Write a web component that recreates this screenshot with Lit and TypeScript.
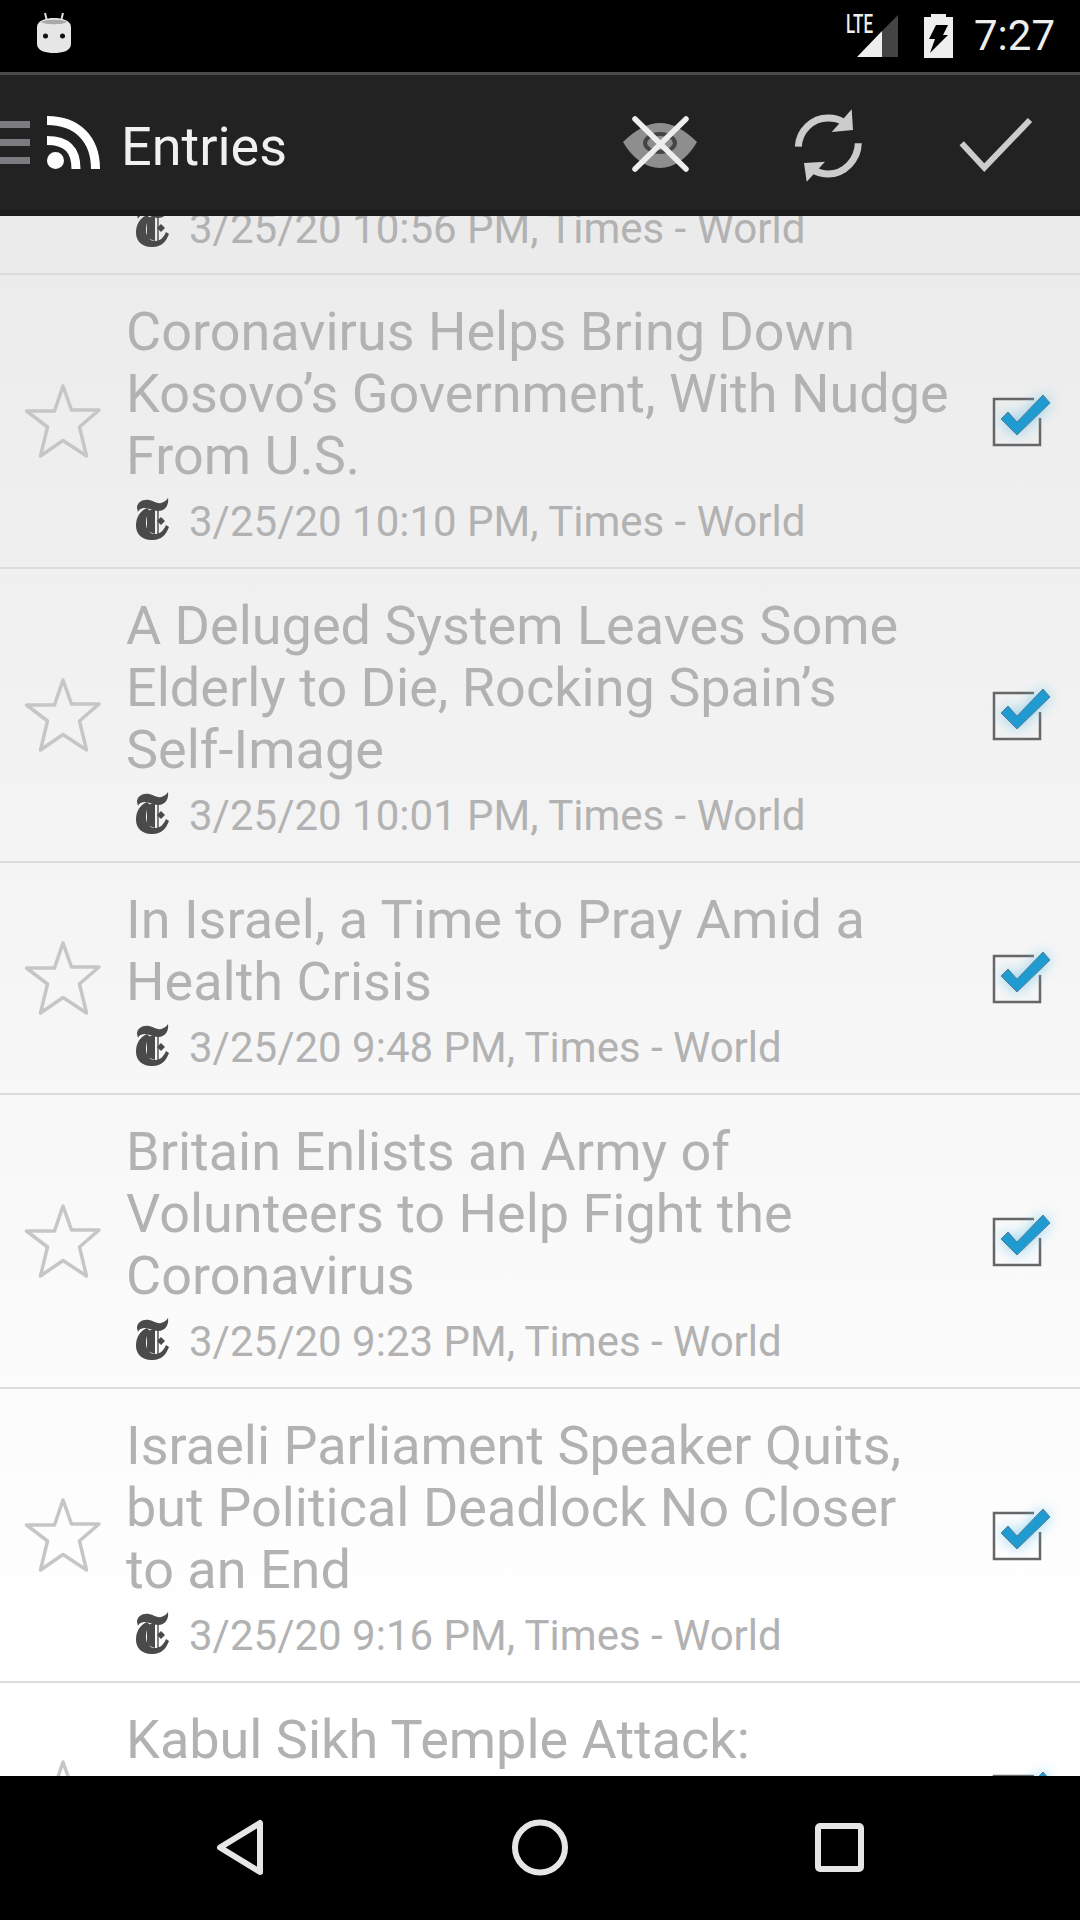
import { LitElement, html, css } from "lit";
import { customElement } from "lit/decorators.js";

const entries = [
  { title: "Coronavirus Helps Bring Down Kosovo’s Government, With Nudge From U.S.", meta: "3/25/20 10:10 PM, Times - World" },
  { title: "A Deluged System Leaves Some Elderly to Die, Rocking Spain’s Self-Image", meta: "3/25/20 10:01 PM, Times - World" },
  { title: "In Israel, a Time to Pray Amid a Health Crisis", meta: "3/25/20 9:48 PM, Times - World" },
  { title: "Britain Enlists an Army of Volunteers to Help Fight the Coronavirus", meta: "3/25/20 9:23 PM, Times - World" },
  { title: "Israeli Parliament Speaker Quits, but Political Deadlock No Closer to an End", meta: "3/25/20 9:16 PM, Times - World" },
];

// NYT blackletter T, coords from a 60x60 crop
const logo = html`<svg class="logo" viewBox="7 0 53 60" width="53" height="60">
  <path fill="#4a4a4a" d="M17 18C17 12 23 9 29 10C34 11 37 14 41 13C44 12 46 11 48 8C49 14 46 21 38 21C33 21 29 18 25 18C22 18 19 19 18 22Z" />
  <path fill="#4a4a4a" d="M27 18C20 21 16 27 16 36C16 45 24 51 33 50C41 50 46 45 49 37L46 35C43 42 39 44 35 44C29 44 26 39 26 33C26 28 27 24 30 21Z" />
  <path fill="#4a4a4a" d="M27 21L35 19V44L27 41Z" />
  <path fill="none" stroke="#4a4a4a" stroke-width="1.4" d="M38 20V46" />
  <path fill="#4a4a4a" d="M41 27L45 31L41 35L37 31Z" />
</svg>`;

const star = html`<svg class="star" viewBox="20 20 85 85" width="85" height="85">
  <path fill="none" stroke="#c6c6c6" stroke-width="3.500" stroke-linejoin="round"
    d="M62 27L70.500 51H98L78.500 68L85.500 97L62 81.500L39.500 97L46.500 68L25.500 52H53.500Z" />
</svg>`;

const checkbox = html`<svg class="check" viewBox="0 0 120 100" width="120" height="100">
  <defs><filter id="glow" x="-50%" y="-50%" width="200%" height="200%"><feGaussianBlur stdDeviation="7" /></filter></defs>
  <path fill="none" stroke="#666" stroke-width="2.5" d="M74 28H34V74H80V47" />
  <path fill="#5cc0ea" opacity=".75" filter="url(#glow)" d="M41 48L48 41L57 51L83 24L90 32L57 64Z" />
  <path fill="#1f9bd1" stroke="#5b7f92" stroke-width="1" d="M41 48L48 41L57 51L83 24L90 32L57 64Z" />
</svg>`;

@customElement("app-root")
export class AppRoot extends LitElement {
  static styles = css`
    :host {
      display: block;
      width: 1080px;
      height: 1920px;
      font-family: Roboto, sans-serif;
      background: #000;
    }
    .screen {
      display: flex;
      flex-direction: column;
      height: 1920px;
      overflow: hidden;
    }
    .status {
      flex: none;
      height: 72px;
      display: flex;
      align-items: center;
      padding-left: 37px;
      padding-right: 25px;
      background: #000;
    }
    .status .spacer {
      flex: 1;
    }
    .status svg {
      display: block;
    }
    .droid {
      margin-top: -6px;
    }
    .time {
      margin-left: 21px;
      font-size: 42px;
      color: #eee;
      line-height: 72px;
    }
    .bar {
      flex: none;
      height: 135px;
      display: flex;
      align-items: center;
      background: #222;
      border-top: 3px solid #4a4a4a;
      border-bottom: 6px solid #1b1b1b;
    }
    .burger {
      width: 30px;
      display: flex;
      flex-direction: column;
      gap: 11px;
      margin-right: 17px;
    }
    .burger i {
      display: block;
      height: 7px;
      background: #7b7b80;
    }
    .bar h1 {
      flex: 1;
      margin: 7px 0 0 21px;
      font-size: 54px;
      font-weight: 400;
      color: #f0f0f0;
    }
    .bar svg {
      display: block;
    }
    .list {
      flex: 1;
      min-height: 0;
      overflow: hidden;
      background: linear-gradient(#ebebeb, #ffffff 92%);
    }
    .row {
      display: grid;
      grid-template-columns: 126px 834px 120px;
      align-items: center;
      box-sizing: border-box;
      border-bottom: 2px solid #dcdcdc;
    }
    .star,
    .check {
      display: block;
      justify-self: center;
    }
    .text {
      padding: 26px 8px 16px 0;
    }
    .title {
      font-size: 54px;
      line-height: 62px;
      color: #b2b2b2;
    }
    .meta {
      display: flex;
      align-items: center;
      gap: 9px;
      height: 60px;
      margin-top: 4px;
      font-size: 42px;
      color: #b2b2b2;
    }
    .logo {
      display: block;
      margin: -3px 0 0 1px;
    }
    .cut {
      height: 59px;
      overflow: hidden;
      align-items: end;
      align-content: end;
    }
    .cut .meta {
      grid-column: 2;
      margin: 0 0 15px;
    }
    .last {
      height: 229px;
      border-bottom: none;
      align-items: start;
    }
    .last .star,
    .last .check {
      align-self: center;
    }
    .nav {
      flex: none;
      height: 144px;
      display: flex;
      justify-content: center;
      align-items: center;
      background: #000;
    }
    .nav svg {
      display: block;
      width: 300px;
    }
  `;

  render() {
    return html`<div class="screen">
      <div class="status">
        <svg class="droid" viewBox="37 10 36 46" width="36" height="46">
          <path stroke="#ddd" stroke-width="2" d="M45 13L47 21M63 13L61 21" />
          <path fill="#e6e6e6" d="M37 27C37 20 47 18 54 18C61 18 71 20 71 27V44C71 51 62 53 54 53C46 53 37 51 37 44Z" />
          <path fill="#a9a9a9" d="M41 22C45 19 63 19 67 22C63 25 45 25 41 22Z" />
          <circle cx="45.500" cy="36" r="2.500" fill="#111" />
          <circle cx="62.500" cy="36" r="2.500" fill="#111" />
        </svg>
        <div class="spacer"></div>
        <svg viewBox="845 10 107 52" width="107" height="52">
          <text x="845" y="33" font-family="Roboto, sans-serif" font-weight="500" font-size="25" fill="#eee" textLength="27" lengthAdjust="spacingAndGlyphs">LTE</text>
          <path fill="#eee" d="M856 57L881 31V57Z" />
          <path fill="#444" d="M881 31L897 15V57H881Z" />
          <path fill="#eee" d="M923 17H930V14H945V17H952V58H923Z" />
          <path fill="#000" d="M935 25H947L942 35H947L929 53L934 39H928Z" />
        </svg>
        <span class="time">7:27</span>
      </div>

      <div class="bar">
        <div class="burger"><i></i><i></i><i></i></div>
        <svg viewBox="47 118 53 53" width="53" height="53">
          <circle cx="55.500" cy="162.500" r="8.500" fill="#fff" />
          <path fill="none" stroke="#fff" stroke-width="9" d="M47 142.500C67 142.500 76 152 76 171" />
          <path fill="none" stroke="#fff" stroke-width="9" d="M47 122.500C77 122.500 95.500 141 95.500 171" />
        </svg>
        <h1>Entries</h1>
        <svg viewBox="-4 75 168 135" width="168" height="135">
          <path fill="#8e8e8e" d="M43 142C55 130 68 123 80 123C92 123 105 130 117 142C108 158 94 168 80 168C66 168 52 158 43 142Z" />
          <ellipse cx="80" cy="143" rx="15" ry="9" fill="none" stroke="#444" stroke-width="4" />
          <path fill="none" stroke="#eee" stroke-width="5.500" stroke-linecap="round" d="M55 119L106 169M106 119L55 169" />
        </svg>
        <svg viewBox="164 75 168 135" width="168" height="135">
          <path fill="none" stroke="#ccc" stroke-width="7" d="M218.300 146.700C219 131 232 118 248 118C254 118 259 119 263 122" />
          <path fill="#ccc" d="M271.700 109.300L273 130L251.700 132Z" />
          <path fill="none" stroke="#ccc" stroke-width="7" d="M278.300 143.300C278 159 265 174 248 174C242 174 237 172 233 170" />
          <path fill="#ccc" d="M226.700 181.700L224 163L245 161.700Z" />
        </svg>
        <svg viewBox="332 75 168 135" width="168" height="135">
          <path fill="none" stroke="#ccc" stroke-width="6" d="M381.700 143.300L404.300 167.700L450 120" />
        </svg>
      </div>

      <div class="list">
        <div class="row cut">
          <div class="meta">${logo}<span>3/25/20 10:56 PM, Times - World</span></div>
        </div>
        ${entries.map(
          (e) => html`<div class="row">
            ${star}
            <div class="text">
              <div class="title">${e.title}</div>
              <div class="meta">${logo}<span>${e.meta}</span></div>
            </div>
            ${checkbox}
          </div>`
        )}
        <div class="row last">
          ${star}
          <div class="text"><div class="title">Kabul Sikh Temple Attack:</div></div>
          ${checkbox}
        </div>
      </div>

      <div class="nav">
        <svg viewBox="90 1776 300 144" height="144">
          <path fill="none" stroke="#e6e6e6" stroke-width="6" stroke-linejoin="round" d="M260 1823V1872L220 1847.500Z" />
        </svg>
        <svg viewBox="390 1776 300 144" height="144">
          <circle cx="540" cy="1847.500" r="25" fill="none" stroke="#e6e6e6" stroke-width="6" />
        </svg>
        <svg viewBox="690 1776 300 144" height="144">
          <rect x="818" y="1826" width="43" height="43" rx="2" fill="none" stroke="#e6e6e6" stroke-width="6" />
        </svg>
      </div>
    </div>`;
  }
}
